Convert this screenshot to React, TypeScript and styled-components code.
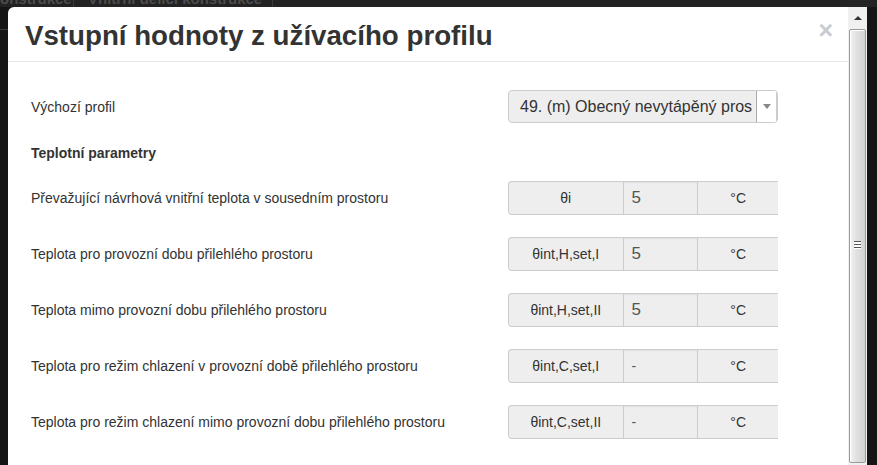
import React from "react";
import styled, { createGlobalStyle } from "styled-components";

const Global = createGlobalStyle`
  html, body { margin: 0; padding: 0; }
  body {
    width: 877px; height: 465px; overflow: hidden;
    background: #151515;
    font-family: "Liberation Sans", Arial, sans-serif;
  }
  * { box-sizing: border-box; }
`;

const Page = styled.div`
  position: relative;
  width: 877px;
  height: 465px;
  overflow: hidden;
  background: #151515;
`;

const TabStrip = styled.div`
  display: flex;
  height: 7px;
  background: #232323;
  overflow: hidden;
`;

const Tab = styled.div<{ $w: number; $pad: number }>`
  width: ${(p) => p.$w}px;
  padding-left: ${(p) => p.$pad}px;
  border-right: 1px solid #3a3a3a;
  color: #4c4c4c;
  font-size: 15px;
  font-weight: bold;
  line-height: 14px;
  margin-top: -8px;
  white-space: nowrap;
  overflow: hidden;
`;

const SideLine = styled.div`
  margin-top: 22px;
  width: 8px;
  height: 1px;
  background: #3a3a3a;
`;

const Overlay = styled.div`
  position: absolute;
  left: 0;
  top: 0;
  width: 877px;
  height: 465px;
  display: flex;
  align-items: flex-start;
`;

const Dialog = styled.div`
  margin: 7px 0 0 8px;
  width: 840px;
  height: 700px;
  background: #fff;
  border-radius: 6px 0 0 0;
`;

const Header = styled.div`
  height: 55px;
  padding: 0 17px;
  border-bottom: 1px solid #e5e5e5;
  display: flex;
  align-items: center;
  justify-content: space-between;
`;

const Title = styled.h1`
  margin: 0;
  padding-top: 3px;
  font-size: 27.7px;
  font-weight: bold;
  color: #333;
`;

const Close = styled.span`
  font-size: 25px;
  font-weight: bold;
  color: #c8ccd0;
  margin-right: -2px;
  margin-top: -8px;
  line-height: 1;
`;

const Body = styled.div`
  padding: 28px 70px 0 23px;
  display: flex;
  flex-direction: column;
`;

const Row = styled.div<{ $mb: number; $h: number }>`
  display: flex;
  align-items: center;
  justify-content: space-between;
  height: ${(p) => p.$h}px;
  margin-bottom: ${(p) => p.$mb}px;
`;

const Label = styled.div`
  font-size: 14px;
  color: #333;
`;

const Section = styled.div`
  font-size: 14px;
  font-weight: bold;
  color: #333;
  height: 20px;
  line-height: 20px;
  margin-bottom: 18px;
`;

const Select = styled.div`
  width: 270px;
  height: 33px;
  display: flex;
  border: 1px solid #ccc;
  border-radius: 4px;
  background: #eee;
  overflow: hidden;
`;

const SelectText = styled.div`
  flex: 1;
  padding-left: 11px;
  font-size: 16px;
  color: #333;
  line-height: 31px;
  white-space: nowrap;
  overflow: hidden;
`;

const SelectArrow = styled.div`
  width: 21px;
  flex: none;
  background: #fff;
  border-left: 1px solid #aaa;
  border-right: 1px solid #ccc;
  display: flex;
  align-items: center;
  justify-content: center;
  &::after {
    content: "";
    border-left: 4px solid transparent;
    border-right: 4px solid transparent;
    border-top: 5px solid #888;
  }
`;

const Group = styled.div`
  width: 270px;
  height: 34px;
  display: flex;
  border: 1px solid #ccc;
  border-right: none;
  border-radius: 4px 0 0 4px;
  background: #eee;
`;

const Addon = styled.div<{ $w: number }>`
  width: ${(p) => p.$w}px;
  display: flex;
  align-items: center;
  justify-content: center;
  font-size: 14px;
  color: #333;
`;

const Value = styled.div`
  width: 76px;
  border-left: 1px solid #ccc;
  border-right: 1px solid #ccc;
  padding-left: 8px;
  display: flex;
  align-items: center;
  font-size: 17px;
  color: #555;
  background: #eee;
  box-shadow: inset 0 1px 1px rgba(0, 0, 0, 0.06);
`;

const Dash = styled.span`
  font-size: 14px;
  color: #555;
`;

const Scrollbar = styled.div`
  margin-top: 7px;
  width: 19px;
  height: 458px;
  background: #f0f0f0;
  display: flex;
  flex-direction: column;
  align-items: center;
`;

const UpButton = styled.div`
  height: 22px;
  width: 19px;
  display: flex;
  align-items: center;
  justify-content: center;
  &::after {
    content: "";
    border-left: 4px solid transparent;
    border-right: 4px solid transparent;
    border-bottom: 4px solid #333;
  }
`;

const Thumb = styled.div`
  width: 17px;
  height: 434px;
  border: 1px solid #9a9a9a;
  border-radius: 2px;
  background: linear-gradient(to right, #f4f4f4 0%, #e2e2e2 40%, #d2d2d2 100%);
  box-shadow: inset 1px 1px 0 #fff;
  display: flex;
  align-items: center;
  justify-content: center;
`;

const Grip = styled.div`
  width: 7px;
  height: 8px;
  margin-top: -2px;
  background: repeating-linear-gradient(
    to bottom,
    #555 0px,
    #555 1px,
    #fff 1px,
    #fff 3px
  );
`;

type Param = { label: string; sym: string; value: string };

const params: Param[] = [
  { label: "Převažující návrhová vnitřní teplota v sousedním prostoru", sym: "θi", value: "5" },
  { label: "Teplota pro provozní dobu přilehlého prostoru", sym: "θint,H,set,I", value: "5" },
  { label: "Teplota mimo provozní dobu přilehlého prostoru", sym: "θint,H,set,II", value: "5" },
  { label: "Teplota pro režim chlazení v provozní době přilehlého prostoru", sym: "θint,C,set,I", value: "-" },
  { label: "Teplota pro režim chlazení mimo provozní dobu přilehlého prostoru", sym: "θint,C,set,II", value: "-" },
];

export default function App() {
  return (
    <>
      <Global />
      <Page>
        <TabStrip>
          <Tab $w={74} $pad={0}>onstrukce</Tab>
          <Tab $w={199} $pad={14}>Vnitřní dělící konstrukce</Tab>
        </TabStrip>
        <SideLine />
        <Overlay>
          <Dialog>
            <Header>
              <Title>Vstupní hodnoty z užívacího profilu</Title>
              <Close>×</Close>
            </Header>
            <Body>
              <Row $mb={20} $h={33}>
                <Label>Výchozí profil</Label>
                <Select>
                  <SelectText>49. (m) Obecný nevytápěný pros</SelectText>
                  <SelectArrow />
                </Select>
              </Row>
              <Section>Teplotní parametry</Section>
              {params.map((p) => (
                <Row key={p.sym} $mb={22} $h={34}>
                  <Label>{p.label}</Label>
                  <Group>
                    <Addon $w={114}>{p.sym}</Addon>
                    <Value>{p.value === "-" ? <Dash>-</Dash> : p.value}</Value>
                    <Addon $w={80}>°C</Addon>
                  </Group>
                </Row>
              ))}
            </Body>
          </Dialog>
          <Scrollbar>
            <UpButton />
            <Thumb>
              <Grip />
            </Thumb>
          </Scrollbar>
        </Overlay>
      </Page>
    </>
  );
}
